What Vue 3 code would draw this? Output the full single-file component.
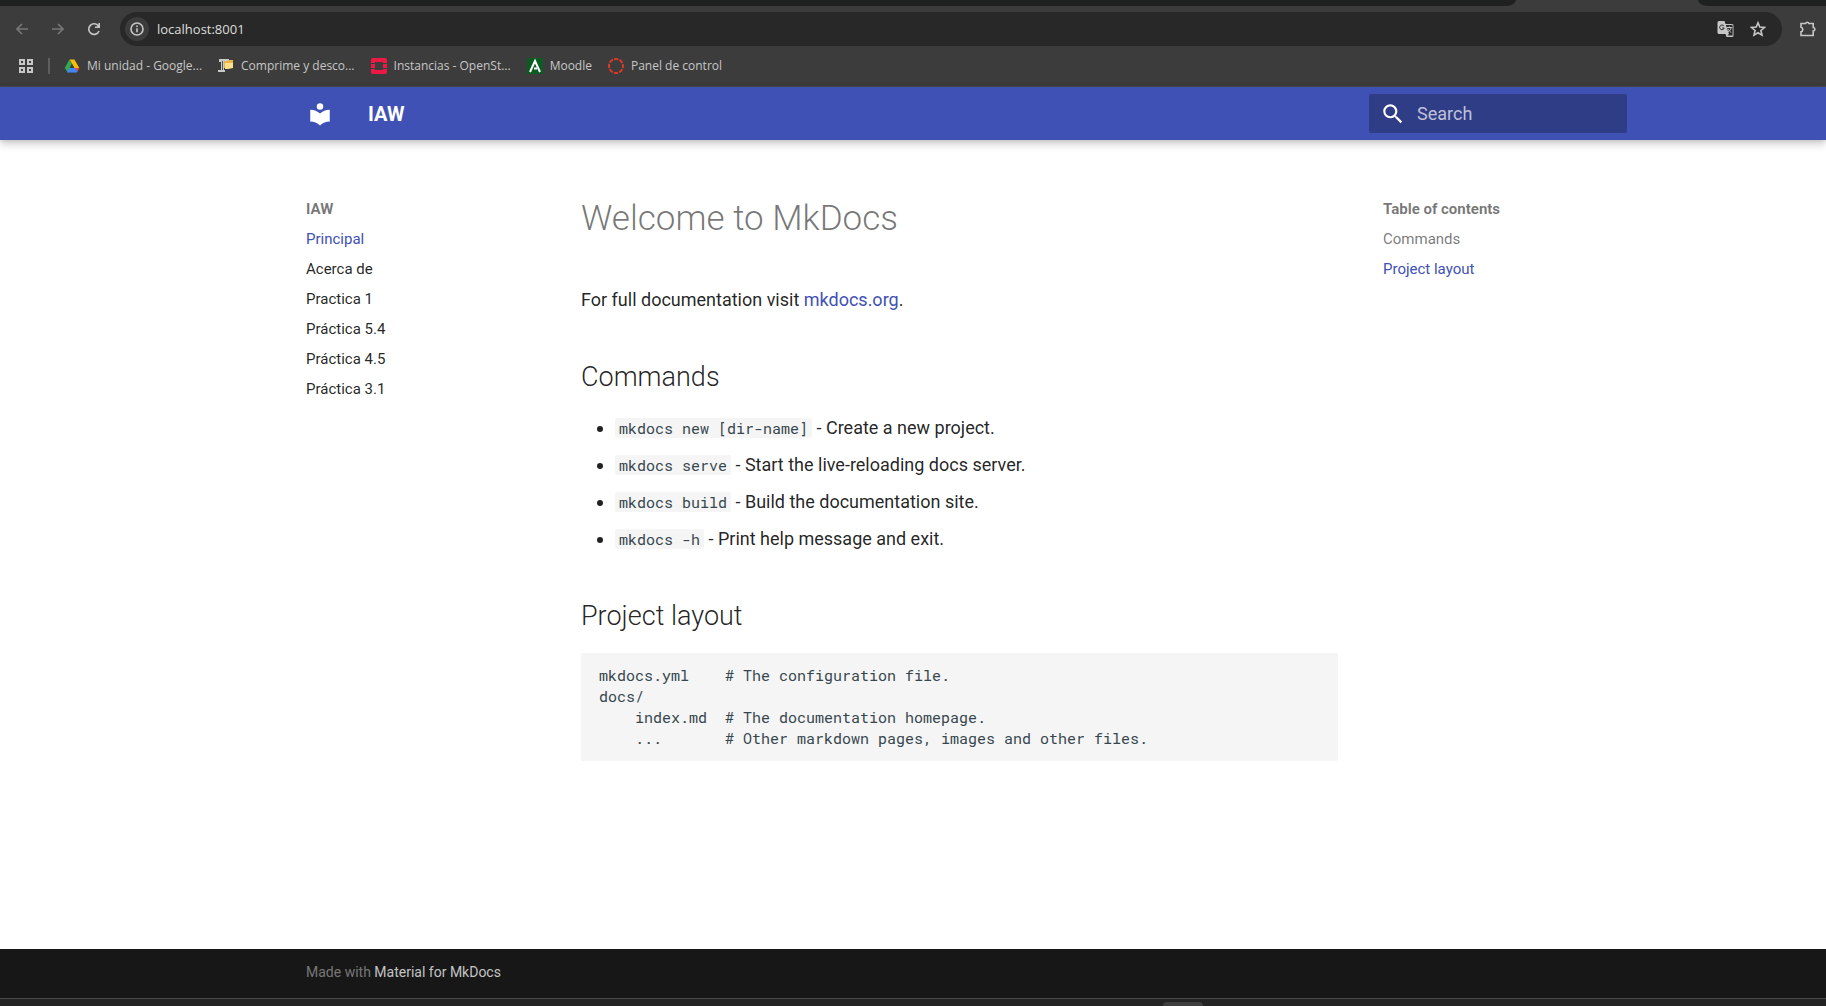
<script setup>
import { ref } from 'vue'

const address = ref('localhost:8001')
const query = ref('')

const pages = [
  { title: 'Principal', active: true },
  { title: 'Acerca de' },
  { title: 'Practica 1' },
  { title: 'Práctica 5.4' },
  { title: 'Práctica 4.5' },
  { title: 'Práctica 3.1' },
]

const commands = [
  { code: 'mkdocs new [dir-name]', text: 'Create a new project.' },
  { code: 'mkdocs serve', text: 'Start the live-reloading docs server.' },
  { code: 'mkdocs build', text: 'Build the documentation site.' },
  { code: 'mkdocs -h', text: 'Print help message and exit.' },
]

const layout = `mkdocs.yml    # The configuration file.
docs/
    index.md  # The documentation homepage.
    ...       # Other markdown pages, images and other files.`
</script>

<template>
  <div class="screen">
    <div class="browser">
      <div class="tabs">
        <div class="tabs-left"></div>
        <div class="tabs-right"></div>
      </div>
      <div class="toolbar">
        <button class="tool dim" aria-label="Back">
          <svg width="12" height="12" viewBox="0 0 12 12"><path d="M12 6H1M6 1L1 6l5 5" /></svg>
        </button>
        <button class="tool dim" aria-label="Forward">
          <svg width="12" height="12" viewBox="0 0 12 12"><path d="M0 6h11M6 1l5 5-5 5" /></svg>
        </button>
        <button class="tool" aria-label="Reload">
          <svg class="light" width="14" height="14" viewBox="0 0 14 14"><path d="M12 9A5.300 5.300 0 1 1 11.500 4.200M12.200 1v4.200H8" /></svg>
        </button>
        <div class="omnibox">
          <button class="info" aria-label="Site information">
            <svg class="light" width="14" height="14" viewBox="0 0 14 14"><circle cx="7" cy="7" r="6" /><path d="M7 6.200v4M7 3.600v1.400" /></svg>
          </button>
          <input v-model="address" class="address" aria-label="Address" />
          <button class="action" aria-label="Translate">
            <svg width="18" height="18" viewBox="0 0 18 18">
              <path class="solid" d="M2 1h5.500l1 3H15a1.500 1.500 0 0 1 1.500 1.500v10A1.500 1.500 0 0 1 15 17H9.500l-1-3H2A1.500 1.500 0 0 1 .5 12.500v-10A1.500 1.500 0 0 1 2 1z" />
              <path class="hole" d="M8.900 5H15a.6.600 0 0 1 .6.600V15a.6.600 0 0 1-.6.600h-4.600L12 14z" />
              <path class="ink" d="M6.900 6.100A2.300 2.300 0 1 0 7.200 8H5.200" />
              <path class="thin" d="M10 7.500h5M12.400 6.300v1.200M14.200 7.600c-.4 2.200-2 3.800-3.600 4.400M11 8.600c.6 1.800 2 3 3.300 3.900" />
            </svg>
          </button>
          <button class="action" aria-label="Bookmark this page">
            <svg class="light" width="16" height="16" viewBox="0 0 16 16"><path d="M8 1.800l1.800 4.300 4.600.4-3.500 3 1.100 4.600L8 11.700l-4 2.400 1.100-4.600-3.500-3 4.600-.4z" /></svg>
          </button>
        </div>
        <button class="extensions" aria-label="Extensions">
          <svg class="light" width="18" height="18" viewBox="0 0 18 18"><path d="M2 3.500h4.700a1.600 1.600 0 0 1 3.100 0H14.200v4a1.700 1.700 0 0 1 0 3.400v4.600H2v-3.800c2.400-.5 2.400-4 0-4.500z" /></svg>
        </button>
      </div>
      <nav class="bookmarks" aria-label="Bookmarks">
        <button class="apps" aria-label="Apps">
          <svg width="14" height="14" viewBox="0 0 14 14"><path d="M1 1h4v4H1zM9 1h4v4H9zM1 9h4v4H1zM9 9h4v4H9z" /></svg>
        </button>
        <span class="divider"></span>
        <a class="bookmark" href="#">
          <svg width="16" height="16" viewBox="0 0 16 16">
            <path fill="#fbbc04" d="M5.600 1.500h4.800L15.300 10h-4.900z" />
            <path fill="#4285f4" d="M3.400 10h11.900l-2.500 4.500H3z" />
            <path fill="#ea4335" d="M11.200 10h4.100l-1.900 3.400z" />
            <path fill="#34a853" d="M5.400 1.500L8 5.800 3.400 14 .7 10z" />
            <path fill="#3c3c3c" d="M8 6l2.200 4H5.800z" />
          </svg>
          <span>Mi unidad - Google...</span>
        </a>
        <a class="bookmark" href="#">
          <svg width="16" height="16" viewBox="0 0 16 16">
            <path fill="#c9c9c9" d="M1 1h10v3H6v8H3V4H1zM0 12h7v2H0z" />
            <path fill="#555" d="M4 3h1v9H4z" />
            <path fill="#e8b54a" d="M6 3h4l1-1h4v8H6z" />
            <path fill="#ffe08a" d="M7 5h8v5l-5 1H7z" />
          </svg>
          <span>Comprime y desco...</span>
        </a>
        <a class="bookmark" href="#">
          <svg width="16" height="16" viewBox="0 0 16 16">
            <path fill="#ed1944" d="M2 0h12a2 2 0 0 1 2 2v3h-4V4H4v1H0V2a2 2 0 0 1 2-2zM0 6h4v4H0zM12 6h4v4h-4zM0 11h4v1h8v-1h4v3a2 2 0 0 1-2 2H2a2 2 0 0 1-2-2z" />
          </svg>
          <span>Instancias - OpenSt...</span>
        </a>
        <a class="bookmark" href="#">
          <svg width="16" height="16" viewBox="0 0 16 16">
            <path fill="#0b5b22" d="M0 0h16v16H0z" />
            <path fill="none" stroke="#fff" stroke-width="2" d="M3 14L8 3l5 11M7 10.500h3" />
          </svg>
          <span>Moodle</span>
        </a>
        <a class="bookmark" href="#">
          <svg width="16" height="16" viewBox="0 0 16 16">
            <circle cx="8" cy="8" r="7" fill="none" stroke="#e0392b" stroke-width="2" stroke-dasharray="4.200 1.298" stroke-dashoffset="2.100" />
          </svg>
          <span>Panel de control</span>
        </a>
      </nav>
    </div>

    <header class="header">
      <div class="shell header-row">
        <a class="logo" href="#" aria-label="IAW">
          <svg width="26" height="26" viewBox="0 0 24 24"><path fill="#fff" d="M12 8a3 3 0 0 0 3-3 3 3 0 0 0-3-3 3 3 0 0 0-3 3 3 3 0 0 0 3 3m0 3.540C9.640 9.350 6.500 8 3 8v11c3.500 0 6.640 1.350 9 3.540 2.360-2.190 5.500-3.540 9-3.540V8c-3.500 0-6.640 1.350-9 3.540z" /></svg>
        </a>
        <span class="site">IAW</span>
        <label class="search">
          <svg width="26" height="26" viewBox="0 0 24 24"><path fill="#fff" d="M9.500 3A6.500 6.500 0 0 1 16 9.500c0 1.610-.59 3.090-1.560 4.230l.27.270h.79l5 5-1.500 1.500-5-5v-.79l-.27-.27A6.516 6.516 0 0 1 9.500 16 6.500 6.500 0 0 1 3 9.500 6.500 6.500 0 0 1 9.500 3m0 2C7 5 5 7 5 9.500S7 14 9.500 14 14 12 14 9.500 12 5 9.500 5z" /></svg>
          <input v-model="query" type="text" placeholder="Search" aria-label="Search" />
        </label>
      </div>
    </header>

    <main class="main">
      <div class="shell columns">
        <nav class="side" aria-label="IAW">
          <strong>IAW</strong>
          <a v-for="page in pages" :key="page.title" href="#" :class="{ active: page.active }">{{ page.title }}</a>
        </nav>
        <article class="content">
          <h1>Welcome to MkDocs</h1>
          <p>For full documentation visit <a href="#">mkdocs.org</a>.</p>
          <h2>Commands</h2>
          <ul>
            <li v-for="item in commands" :key="item.code"><code>{{ item.code }}</code> - {{ item.text }}</li>
          </ul>
          <h2>Project layout</h2>
          <pre>{{ layout }}</pre>
        </article>
        <nav class="side" aria-label="Table of contents">
          <strong>Table of contents</strong>
          <a href="#" class="passed">Commands</a>
          <a href="#" class="active">Project layout</a>
        </nav>
      </div>
    </main>

    <footer class="footer">
      <div class="shell">
        <p>Made with <a href="#">Material for MkDocs</a></p>
      </div>
    </footer>
    <div class="taskbar"><span class="task"></span></div>
  </div>
</template>

<style>
body {
  margin: 0;
}
</style>

<style scoped>
* {
  box-sizing: border-box;
}
.screen {
  display: flex;
  flex-direction: column;
  min-height: 100vh;
  background: #fff;
  color: rgba(0, 0, 0, 0.87);
  font-family: Roboto, sans-serif;
}
a {
  color: inherit;
  text-decoration: none;
}
button {
  display: flex;
  align-items: center;
  justify-content: center;
  padding: 0;
  border: 0;
  background: none;
  flex: none;
}
svg {
  display: block;
  flex: none;
}

/* Browser window */
.browser {
  background: #3c3c3c;
  border-bottom: 1px solid #4a4a4a;
  color: #c7c7c7;
  font-family: "Open Sans", sans-serif;
}
.browser button svg {
  fill: none;
  stroke: #c7c7c7;
  stroke-width: 2;
}
.browser button .light {
  stroke-width: 1.6;
}
.tabs {
  display: flex;
  justify-content: space-between;
  height: 6px;
}
.tabs-left {
  width: 83%;
  background: #1f2120;
  border-bottom-right-radius: 10px 6px;
}
.tabs-right {
  width: 7%;
  background: #1f2120;
  border-bottom-left-radius: 10px 6px;
}
.toolbar {
  display: flex;
  align-items: center;
  height: 46px;
  padding-left: 4px;
}
.tool {
  width: 36px;
  height: 36px;
}
.browser .dim svg {
  stroke: #777;
  stroke-width: 1.6;
}
.omnibox {
  display: flex;
  flex: 1;
  align-items: center;
  height: 34px;
  margin-left: 8px;
  padding: 0 8px 0 5px;
  border-radius: 17px;
  background: #282828;
}
.info {
  width: 24px;
  height: 24px;
  border-radius: 12px;
  background: #3c3c3c;
}
.address {
  flex: 1;
  min-width: 0;
  padding: 0 0 0 8px;
  border: 0;
  outline: 0;
  background: none;
  color: #dedede;
  font: 13px "Open Sans", sans-serif;
}
.action {
  width: 32px;
  height: 32px;
}
.browser .action .solid {
  fill: #c7c7c7;
  stroke: none;
}
.browser .action .hole {
  fill: #282828;
  stroke: none;
}
.browser .action .ink {
  stroke: #282828;
  stroke-width: 1;
}
.browser .action .thin {
  stroke-width: 1;
}
.extensions {
  width: 44px;
  height: 34px;
  padding-left: 8px;
}
.bookmarks {
  display: flex;
  align-items: center;
  height: 34px;
  padding: 0 19px 7px;
  font-size: 12px;
}
.divider {
  width: 2px;
  height: 16px;
  margin: 0 14px 0 15px;
  background: #5e5e5e;
}
.bookmark {
  display: flex;
  align-items: center;
  gap: 7px;
  margin-right: 16px;
  white-space: nowrap;
}

/* Site header */
.shell {
  margin: 0 195px 0 288px;
}
.header {
  position: relative;
  background: #4051b5;
  box-shadow: 0 0 4px rgba(0, 0, 0, 0.1), 0 4px 8px rgba(0, 0, 0, 0.2);
  color: #fff;
}
.header-row {
  display: flex;
  align-items: center;
  height: 53px;
  padding: 0 4px 0 19px;
}
.site {
  flex: 1;
  margin-left: 35px;
  font-size: 20px;
  font-weight: 700;
}
.search {
  display: flex;
  align-items: center;
  gap: 11px;
  width: 258px;
  height: 39px;
  padding-left: 11px;
  border-radius: 2px;
  background: rgba(0, 0, 0, 0.26);
}
.search input {
  flex: 1;
  min-width: 0;
  padding: 0;
  border: 0;
  outline: 0;
  background: none;
  color: #fff;
  font: 18px Roboto, sans-serif;
}
.search input::placeholder {
  color: rgba(255, 255, 255, 0.7);
  opacity: 1;
}

/* Page */
.main {
  flex: 1;
}
.columns {
  display: flex;
  align-items: flex-start;
  padding-top: 56px;
}
.side {
  display: flex;
  flex: none;
  flex-direction: column;
  gap: 10px;
  width: 266px;
  padding: 3px 18px;
  font-size: 15px;
  line-height: 20px;
}
.side strong,
.side .passed {
  color: rgba(0, 0, 0, 0.54);
}
.side .active,
.content a {
  color: #4051b5;
}
.content {
  flex: 1;
  min-width: 0;
  padding: 0 27px;
  font-size: 18px;
  line-height: 28px;
}
.content h1 {
  margin: 0 0 44px;
  color: rgba(0, 0, 0, 0.54);
  font-size: 35px;
  font-weight: 300;
  line-height: 46px;
}
.content p {
  margin: 0 0 44px;
}
.content h2 {
  margin: 0 0 18px;
  font-size: 27px;
  font-weight: 300;
  line-height: 38px;
}
.content ul {
  margin: 0 0 44px;
  padding-left: 34px;
}
.content li {
  margin-bottom: 9px;
}
.content code,
.content pre {
  border-radius: 2px;
  background: #f5f5f5;
  color: #36464e;
  font-family: "Roboto Mono", "DejaVu Sans Mono", monospace;
  font-size: 15px;
}
.content code {
  padding: 0 4px;
}
.content pre {
  margin: 0;
  padding: 12px 18px;
  line-height: 21px;
  overflow: auto;
}

/* Footer */
.footer {
  height: 49px;
  background: #171717;
  color: rgba(255, 255, 255, 0.42);
  font-size: 14px;
  line-height: 20px;
}
.footer p {
  margin: 0;
  padding: 13px 18px;
}
.footer a {
  color: rgba(255, 255, 255, 0.75);
}
.taskbar {
  display: flex;
  align-items: flex-end;
  height: 8px;
  padding-left: 1163px;
  border-top: 1px solid #484848;
  background: #232323;
}
.task {
  width: 40px;
  height: 4px;
  border-radius: 4px 4px 0 0;
  background: #3e3e3e;
}
</style>
